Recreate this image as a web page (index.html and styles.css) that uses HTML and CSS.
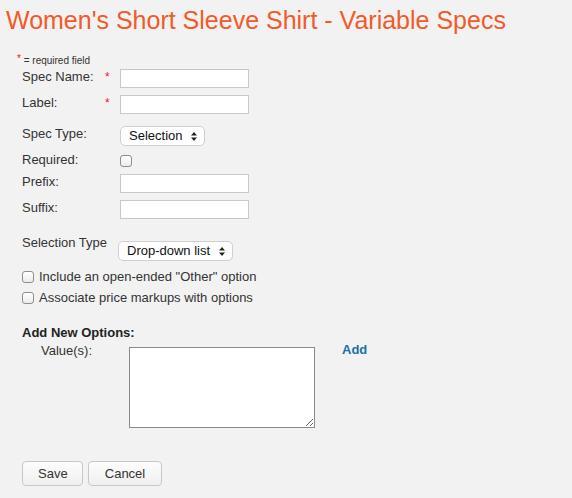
FILE: index.html
```
<!DOCTYPE html>
<html>
<head>
<meta charset="utf-8">
<title>Variable Specs</title>
<link rel="stylesheet" href="styles.css">
</head>
<body>
<h1 class="pageTitle">Women's Short Sleeve Shirt - Variable Specs</h1>
<form class="specForm" action="index.html">
  <p class="reqNote"><span class="star">*</span> = required field</p>

  <div class="row rowName">
    <label>Spec Name:</label><span class="star">*</span>
    <input type="text" class="textField">
  </div>
  <div class="row rowLabel">
    <label>Label:</label><span class="star">*</span>
    <input type="text" class="textField">
  </div>
  <div class="row rowType">
    <label>Spec Type:</label><span></span>
    <span class="selectWrap typeSelect">
      <select><option>Selection</option><option>Text</option></select>
      <svg class="arrows" width="6" height="9" viewBox="0 0 6 9"><path d="M3 0L6 3.5H0z M3 9L6 5.5H0z" fill="#222"/></svg>
    </span>
  </div>
  <div class="row rowRequired">
    <label>Required:</label><span></span>
    <input type="checkbox" class="check">
  </div>
  <div class="row rowPrefix">
    <label>Prefix:</label><span></span>
    <input type="text" class="textField">
  </div>
  <div class="row rowSuffix">
    <label>Suffix:</label><span></span>
    <input type="text" class="textField">
  </div>

  <div class="row rowSelType">
    <label>Selection Type</label>
    <span class="selectWrap listSelect">
      <select><option>Drop-down list</option><option>Radio buttons</option></select>
      <svg class="arrows" width="6" height="9" viewBox="0 0 6 9"><path d="M3 0L6 3.5H0z M3 9L6 5.5H0z" fill="#222"/></svg>
    </span>
  </div>

  <label class="checkRow firstCheck"><input type="checkbox" class="check"> Include an open-ended "Other" option</label>
  <label class="checkRow"><input type="checkbox" class="check"> Associate price markups with options</label>

  <h4 class="optHead">Add New Options:</h4>
  <div class="valueRow">
    <label>Value(s):</label>
    <textarea></textarea>
    <a href="#" class="addLink">Add</a>
  </div>

  <div class="buttons">
    <button type="button" class="btn saveBtn">Save</button>
    <button type="button" class="btn">Cancel</button>
  </div>
</form>
</body>
</html>
```

FILE: styles.css
```
body {
  margin: 0;
  background: #f2f2f2;
  color: #333;
  font-family: "Liberation Sans", Arial, sans-serif;
  font-size: 13px;
}
.pageTitle {
  margin: 5px 0 0 6px;
  color: #f15a29;
  font-size: 25px;
  font-weight: normal;
  line-height: 30px;
}
.specForm {
  padding-left: 22px;
}
.reqNote {
  margin: 18px 0 2px -5px;
  font-size: 10px;
  line-height: 12px;
  color: #333;
}
.reqNote .star {
  font-size: 10px;
  vertical-align: 2px;
}
.star {
  color: #e8222a;
  font-size: 12px;
  line-height: 12px;
}
.row {
  display: grid;
  grid-template-columns: 83px 15px auto;
  align-items: start;
  justify-items: start;
  line-height: 16px;
}
.row .star {
  margin-top: 2px;
}
.textField {
  box-sizing: border-box;
  width: 129px;
  height: 19px;
  margin: 0;
  border: 1px solid #c9c9c9;
  background: #fff;
  padding: 1px 3px;
  font: 13px "Liberation Sans", Arial, sans-serif;
}
.rowName { margin-top: 0; }
.rowLabel { margin-top: 7px; }
.rowType { margin-top: 12px; }
.rowRequired { margin-top: 6px; }
.rowRequired .check { margin-top: 3px; }
.rowPrefix { margin-top: 6px; }
.rowSuffix { margin-top: 7px; }
.rowSelType {
  grid-template-columns: 96px auto;
  margin-top: 16px;
}
.rowSelType .selectWrap { margin-top: 6px; }

.selectWrap {
  position: relative;
  display: inline-block;
  height: 20px;
}
.selectWrap select {
  appearance: none;
  -webkit-appearance: none;
  box-sizing: border-box;
  height: 20px;
  margin: 0;
  padding: 0 0 1px 8px;
  border: 1px solid #cfcfcf;
  border-radius: 5px;
  background: #fff;
  color: #111;
  font: 13px "Liberation Sans", Arial, sans-serif;
}
.typeSelect select { width: 85px; }
.listSelect select { width: 115px; }
.arrows {
  position: absolute;
  right: 8px;
  top: 6px;
  pointer-events: none;
}

.check {
  appearance: none;
  -webkit-appearance: none;
  box-sizing: border-box;
  width: 12px;
  height: 12px;
  margin: 0;
  border: 1px solid #8e8e8e;
  border-radius: 3px;
  background: linear-gradient(#fff, #ececec);
}
.checkRow {
  display: flex;
  align-items: center;
  gap: 5px;
  line-height: 16px;
  height: 16px;
}
.firstCheck { margin-top: 8px; }
.checkRow + .checkRow { margin-top: 5px; }

.optHead {
  margin: 19px 0 0;
  font-size: 13px;
  line-height: 16px;
  color: #222;
}
.valueRow {
  display: grid;
  grid-template-columns: 107px 186px auto;
  align-items: start;
  margin-top: 2px;
  line-height: 16px;
}
.valueRow label {
  padding-left: 19px;
}
.valueRow textarea {
  box-sizing: border-box;
  width: 186px;
  height: 81px;
  margin: 4px 0 0;
  border: 1px solid #8a8a8a;
  background: #fff;
}
.addLink {
  margin: -1px 0 0 27px;
  color: #1d6fa5;
  font-weight: bold;
  text-decoration: none;
}
.buttons {
  display: flex;
  gap: 5px;
  margin-top: 33px;
}
.btn {
  box-sizing: border-box;
  height: 25px;
  padding: 0 15px;
  border: 1px solid #c8c8c8;
  border-radius: 4px;
  background: linear-gradient(#fdfdfd, #efefef);
  color: #333;
  font: 13px "Liberation Sans", Arial, sans-serif;
}
.saveBtn { width: 61px; }
.btn + .btn { width: 74px; }
```
